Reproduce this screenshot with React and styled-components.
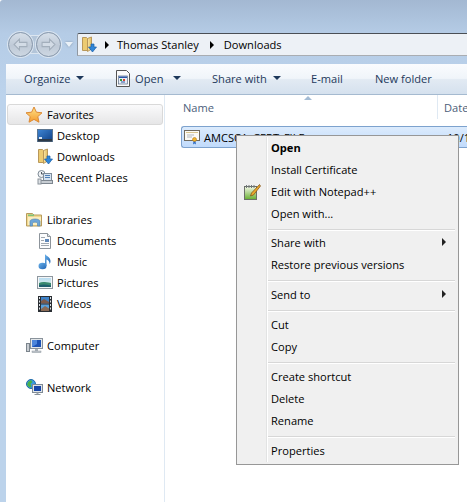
import React from 'react';
import styled, { createGlobalStyle } from 'styled-components';

const GlobalStyle = createGlobalStyle`
  html, body {
    margin: 0;
    padding: 0;
    background: #fff;
  }
  body {
    font-family: "Open Sans", "Noto Sans", "Liberation Sans", sans-serif;
    font-size: 11.1px;
    color: #000;
  }
`;

const StarIcon = () => (
  <svg width="18" height="18" viewBox="0 0 18 18">
    <defs>
      <linearGradient id="star" x1="0" y1="0" x2="0" y2="1">
        <stop offset="0" stopColor="#fde48a" />
        <stop offset="1" stopColor="#f59a2c" />
      </linearGradient>
    </defs>
    <path d="M9 1l2.4 5.2 5.6.6-4.2 3.8 1.2 5.6L9 13.4 4 16.2l1.2-5.6L1 6.8l5.6-.6z" fill="url(#star)" stroke="#dc8a36" strokeWidth="1" />
  </svg>
);

const DesktopIcon = () => (
  <svg width="16" height="14" viewBox="0 0 16 14">
    <defs>
      <linearGradient id="desk" x1="0" y1="0" x2="1" y2="1">
        <stop offset="0" stopColor="#3f86d4" />
        <stop offset="1" stopColor="#0e3f86" />
      </linearGradient>
    </defs>
    <rect x="0.500" y="0.500" width="15" height="12" fill="url(#desk)" stroke="#5b7590" />
    <rect x="1" y="10" width="14" height="2.500" fill="#2d3a48" />
    <rect x="2" y="8" width="3" height="2" fill="#d9e6f4" />
  </svg>
);

const DownloadFolderIcon = () => (
  <svg width="16" height="17" viewBox="0 0 16 17">
    <defs>
      <linearGradient id="dlf" x1="0" y1="0" x2="1" y2="0">
        <stop offset="0" stopColor="#fbe9a8" />
        <stop offset="1" stopColor="#dfb95e" />
      </linearGradient>
    </defs>
    <path d="M1.500 1.500h4l1 1v12h-5z" fill="#eccb72" stroke="#b9985a" />
    <path d="M6.500 2.500l4-1.500v12l-4 2.500z" fill="url(#dlf)" stroke="#b9985a" />
    <path d="M10 8h3v3h2.500l-4 5-4-5H10z" fill="#2f86d8" stroke="#1b5ea6" strokeWidth="0.7" />
  </svg>
);

const RecentIcon = () => (
  <svg width="17" height="16" viewBox="0 0 17 16">
    <circle cx="4.500" cy="4" r="3.500" fill="#eef1f4" stroke="#7f8b96" />
    <path d="M4.500 2v2h2" fill="none" stroke="#4c5660" />
    <rect x="6.500" y="3.500" width="8" height="7" fill="#d5e3f2" stroke="#7e8c9a" />
    <rect x="8" y="5" width="5" height="1" fill="#4f7fb5" />
    <rect x="8" y="7" width="5" height="1" fill="#4f7fb5" />
    <rect x="3.500" y="10.500" width="12" height="3" fill="#c7cdd3" stroke="#7e8790" />
    <rect x="1" y="9" width="3" height="5" fill="#dde1e5" stroke="#8b949c" />
  </svg>
);

const LibraryIcon = () => (
  <svg width="17" height="15" viewBox="0 0 17 15">
    <path d="M0.500 1.500h6l1.500 1.500h7.500v11h-15z" fill="#f2d98f" stroke="#b89c5d" />
    <rect x="2" y="2.500" width="6" height="1.600" fill="#7fc37b" />
    <rect x="2" y="5" width="13" height="8" fill="#fbeec0" />
    <path d="M4 14V9.500c0-1.500 2-2.500 5-2.500s5 1 5 2.500V14h-2.500v-2.800c0-.6-1-1-2.500-1s-2.500.4-2.500 1V14z" fill="#6ea6d8" stroke="#4b7fb0" strokeWidth="0.6" />
  </svg>
);

const DocumentIcon = () => (
  <svg width="14" height="16" viewBox="0 0 14 16">
    <path d="M1.500.5h8l3 3v12h-11z" fill="#fbfcfd" stroke="#8d949b" />
    <path d="M9.500.5v3h3" fill="#dfe4e9" stroke="#8d949b" />
    <rect x="3" y="4" width="4" height="1" fill="#a0a8b0" />
    <rect x="7" y="6" width="4" height="3" fill="#5d86b8" />
    <rect x="3" y="7" width="3" height="1" fill="#a0a8b0" />
    <rect x="3" y="10" width="8" height="1" fill="#a0a8b0" />
    <rect x="3" y="12" width="8" height="1" fill="#a0a8b0" />
  </svg>
);

const MusicIcon = () => (
  <svg width="14" height="17" viewBox="0 0 14 17">
    <defs>
      <linearGradient id="note" x1="0" y1="0" x2="1" y2="1">
        <stop offset="0" stopColor="#6bb2ea" />
        <stop offset="1" stopColor="#1f63b4" />
      </linearGradient>
    </defs>
    <ellipse cx="4.500" cy="13" rx="4" ry="3.300" fill="url(#note)" />
    <path d="M7 13V1c1 2 5.500 3 5.500 7 0 1.500-.5 2.500-1 3 .2-2.500-1.500-4-3-4.500V13z" fill="url(#note)" />
  </svg>
);

const PictureIcon = () => (
  <svg width="16" height="13" viewBox="0 0 16 13">
    <defs>
      <linearGradient id="sky" x1="0" y1="0" x2="0" y2="1">
        <stop offset="0" stopColor="#b8dcf2" />
        <stop offset="1" stopColor="#ecf5e6" />
      </linearGradient>
    </defs>
    <rect x="0.500" y="0.500" width="15" height="12" fill="#f4f6f7" stroke="#8e979f" />
    <rect x="2" y="2" width="12" height="9" fill="url(#sky)" />
    <path d="M2 7c3-1.500 6-1 12 0v4H2z" fill="#3b8a70" />
    <path d="M2 9c4-1 8-.5 12 .5V11H2z" fill="#1f5f6e" />
  </svg>
);

const VideoIcon = () => (
  <svg width="14" height="16" viewBox="0 0 14 16">
    <rect x="0" y="0" width="14" height="16" fill="#2a2e33" />
    <rect x="3" y="1" width="8" height="6.500" fill="#3f83c9" />
    <rect x="3" y="8.500" width="8" height="6.500" fill="#58a0dc" />
    <path d="M3 5l3-2 5 3v1.500H3z" fill="#7d5a4a" />
    <path d="M3 13l4-3 4 2.500V15H3z" fill="#8a6a55" />
    <path d="M1 1h1v2H1zM1 4.500h1v2H1zM1 8h1v2H1zM1 11.500h1v2H1zM12 1h1v2h-1zM12 4.500h1v2h-1zM12 8h1v2h-1zM12 11.500h1v2h-1z" fill="#dfe4e8" />
  </svg>
);

const ComputerIcon = () => (
  <svg width="17" height="16" viewBox="0 0 17 16">
    <rect x="0.500" y="5.500" width="3" height="8" fill="#c9ced3" stroke="#7b848c" />
    <rect x="4.500" y="0.500" width="12" height="10" fill="#e3e7ea" stroke="#8a939b" />
    <rect x="6" y="2" width="9" height="7" fill="#1d53b5" />
    <path d="M6 2h5v4l-5 3z" fill="#4d86dc" />
    <path d="M9 11h3v2H9z" fill="#aab2b9" />
    <rect x="6" y="13" width="9" height="1.500" fill="#c4cad0" stroke="#8a939b" strokeWidth="0.5" />
  </svg>
);

const NetworkIcon = () => (
  <svg width="17" height="17" viewBox="0 0 17 17">
    <circle cx="5" cy="5" r="4.500" fill="#3a9be0" stroke="#216ba8" />
    <path d="M2 3l3-2 1.500 2-2 2 1 2.500-2 1L1 6z" fill="#49b24a" />
    <rect x="6.500" y="5.500" width="10" height="8" fill="#dfe4e8" stroke="#7f8a94" />
    <rect x="8" y="7" width="7" height="5" fill="#1746a8" />
    <rect x="10.500" y="13.500" width="2" height="1.500" fill="#9aa3ab" />
    <rect x="8.500" y="15" width="6" height="1" fill="#8a939b" />
  </svg>
);

const CertificateIcon = () => (
  <svg width="17" height="16" viewBox="0 0 17 16">
    <rect x="0.500" y="1.500" width="15" height="10" fill="#fbfaf4" stroke="#6f6a5e" />
    <rect x="2" y="3" width="12" height="1" fill="#d8c48e" />
    <rect x="3" y="5.500" width="7" height="1" fill="#b4b8be" />
    <rect x="3" y="7.500" width="5" height="1" fill="#b4b8be" />
    <path d="M9.500 12l-.5 3.500 1.500-1 1.500 1-.5-3.500z" fill="#2f6fc8" />
    <circle cx="10.500" cy="10.500" r="2" fill="#f0b42c" stroke="#b87a16" strokeWidth="0.6" />
  </svg>
);

const NotepadIcon = () => (
  <svg width="17" height="17" viewBox="0 0 17 17">
    <defs>
      <linearGradient id="pad" x1="0" y1="0" x2="0" y2="1">
        <stop offset="0" stopColor="#f4f8e8" />
        <stop offset="1" stopColor="#67b030" />
      </linearGradient>
    </defs>
    <rect x="0.500" y="2.500" width="12" height="13" fill="url(#pad)" stroke="#6a7068" />
    <path d="M2 1h1v3H2zM4.500 1h1v3h-1zM7 1h1v3H7zM9.500 1h1v3h-1z" fill="#70767a" />
    <path d="M15.500 0.500L7.500 9l-1 3 3-1 7-9z" fill="#e9a82c" stroke="#7b4a12" strokeWidth="0.7" />
  </svg>
);

const OpenAppIcon = () => (
  <svg width="14" height="17" viewBox="0 0 14 17">
    <path d="M.5.500h10l3 3v13H.500z" fill="#fbfbfb" stroke="#555" />
    <rect x="2.500" y="6" width="9" height="8" fill="#e8eef6" stroke="#5a6c84" strokeWidth="0.7" />
    <rect x="3" y="6.500" width="8" height="1.500" fill="#2b56a8" />
    <rect x="4" y="9" width="2" height="2" fill="#2f9a3c" />
    <rect x="7" y="9" width="2" height="2" fill="#d8402e" />
    <rect x="5" y="11.500" width="4" height="1" fill="#2b56a8" />
  </svg>
);

const Page = styled.div`
  position: relative;
  width: 467px;
  height: 502px;
  overflow: hidden;
  display: flex;
  flex-direction: column;
  background: linear-gradient(#a3b8d2 0, #b5cce6 34px, #bcd3ec 95px, #bcd3eb 100%);
  border-top-left-radius: 3px;
`;

const AddressRow = styled.div`
  display: flex;
  align-items: center;
  height: 23px;
  margin-top: 33px;
  flex: none;
`;

const NavGroup = styled.div`
  display: flex;
  align-items: center;
  isolation: isolate;
  width: 77px;
  height: 23px;
  padding-left: 8px;
  box-sizing: border-box;
`;

const NavRound = styled.div`
  position: relative;
  display: flex;
  align-items: center;
  justify-content: center;
  width: 25px;
  height: 25px;
  flex: none;
  margin-left: ${p => (p.$second ? '3px' : 0)};
  border-radius: 50%;
  box-sizing: border-box;
  border: 1px solid #8a99ab;
  box-shadow: 0 0 0 1px #dbe5f0;
  background: linear-gradient(#d6dfe9, #bfcad7 55%, #cdd7e2);

  ${p =>
    p.$second &&
    `&::before {
      content: '';
      position: absolute;
      left: -9px;
      top: 2px;
      width: 12px;
      height: 19px;
      box-sizing: border-box;
      border-top: 1px solid #dbe5f0;
      border-bottom: 1px solid #dbe5f0;
      background: #b3c5d9;
      z-index: -1;
    }`}
`;

const DropCaret = styled.span`
  width: 0;
  height: 0;
  margin-left: 4px;
  border-left: 4px solid transparent;
  border-right: 4px solid transparent;
  border-top: 5px solid #eaf1f8;
  filter: drop-shadow(0 0 1px #8095ac);
`;

const AddressBar = styled.div`
  flex: 1;
  display: flex;
  align-items: center;
  height: 23px;
  box-sizing: border-box;
  border-top: 1px solid #4a4f55;
  border-bottom: 1px solid #a9adb2;
  border-left: 1px solid #8f98a2;
  border-top-left-radius: 2px;
  background: #edf1f6;
  padding-left: 3px;
`;

const Crumb = styled.span`
  margin-right: 11px;
`;

const CrumbArrow = styled.span`
  width: 0;
  height: 0;
  margin-left: ${p => (p.$first ? '8px' : 0)};
  margin-right: ${p => (p.$first ? 8 : 10)}px;
  border-top: 4px solid transparent;
  border-bottom: 4px solid transparent;
  border-left: 4px solid #000;
`;

const Toolbar = styled.div`
  display: flex;
  align-items: center;
  flex: none;
  height: 28px;
  margin: 8px 0 0 6px;
  padding: 0 0 2px 18px;
  color: #1e395b;
  background: linear-gradient(#fafcfe 0, #f0f5fa 48%, #e2eaf3 52%, #d5e1ee 100%);
  border-bottom: 1px solid #a5bad0;
`;

const ToolItem = styled.div`
  display: flex;
  align-items: center;
  width: ${p => p.$width}px;
  flex: none;
`;

const ToolCaret = styled.span`
  width: 0;
  height: 0;
  margin-left: ${p => p.$gap}px;
  border-left: 4px solid transparent;
  border-right: 4px solid transparent;
  border-top: 4px solid #1e395b;
`;

const ToolIcon = styled.span`
  display: flex;
  margin-right: 5px;
`;

const Body = styled.div`
  flex: 1;
  display: flex;
  margin-left: 6px;
  background: #fff;
  min-height: 0;
`;

const NavPane = styled.nav`
  width: 159px;
  flex: none;
  padding-top: 9px;
  box-sizing: border-box;
  border-right: 1px solid #dfe9f3;
`;

const NavGroupBlock = styled.div`
  margin-bottom: 21px;
`;

const NavRow = styled.div`
  display: flex;
  align-items: center;
  height: 21px;
  box-sizing: border-box;
  padding-left: ${p => (p.$child ? 30 : 19)}px;
`;

const SelectedRow = styled(NavRow)`
  margin: 0 1px;
  padding-left: 17px;
  border: 1px solid #d9d9d9;
  border-radius: 3px;
  background: linear-gradient(#fafafb, #e6e6e7);
`;

const NavIcon = styled.span`
  display: flex;
  justify-content: center;
  align-items: center;
  width: 18px;
  margin-right: ${p => (p.$child ? 3 : 4)}px;
`;

const FilePane = styled.main`
  flex: 1;
  position: relative;
  min-width: 0;
`;

const HeaderRow = styled.div`
  position: relative;
  display: flex;
  height: 31px;
  padding-left: 18px;
  color: #4c607a;
`;

const HeaderName = styled.span`
  width: 255px;
  height: 24px;
  padding-top: 5px;
  flex: none;
  box-sizing: border-box;
  background: linear-gradient(90deg, transparent calc(100% - 1px), #dfe9f3 calc(100% - 1px));
`;

const HeaderDate = styled.span`
  padding: 5px 0 0 6px;
`;

const SortArrow = styled.span`
  position: absolute;
  top: 1px;
  left: 139px;
  width: 0;
  height: 0;
  border-left: 4px solid transparent;
  border-right: 4px solid transparent;
  border-bottom: 4px solid #a3bbd4;
`;

const FileRow = styled.div`
  display: flex;
  align-items: center;
  height: 22px;
  margin-left: 16px;
  padding-left: 2px;
  box-sizing: border-box;
  overflow: hidden;
  white-space: nowrap;
  border: 1px solid #7da2ce;
  border-right: none;
  border-radius: 3px 0 0 3px;
  background: linear-gradient(#dcebfc, #c1dbfc);
`;

const FileIcon = styled.span`
  display: flex;
  flex: none;
`;

const FileName = styled.span`
  flex: none;
  width: 243px;
  margin-left: 3px;
`;

const FileDate = styled.span`
  flex: none;
`;

const Menu = styled.div`
  position: absolute;
  left: 236px;
  top: 135px;
  width: 223px;
  box-sizing: border-box;
  padding: 1px 1px 2px;
  border: 1px solid #979797;
  background: #f0f0f0;
`;

const MenuItem = styled.div`
  position: relative;
  display: flex;
  align-items: center;
  justify-content: space-between;
  height: 22px;
  box-sizing: border-box;
  padding: 0 11px 2px 33px;
  font-weight: ${p => (p.$bold ? 700 : 400)};
  background: linear-gradient(90deg, transparent 28px, #e2e3e3 28px, #e2e3e3 29px, #fff 29px, #fff 30px, transparent 30px);
`;

const MenuIcon = styled.span`
  position: absolute;
  left: 6px;
  top: 3px;
  display: flex;
`;

const MenuSep = styled.div`
  height: ${p => (p.$tight ? 7 : 8)}px;
  background:
    linear-gradient(#d7d7d7, #d7d7d7) 30px 4px / calc(100% - 32px) 1px no-repeat,
    linear-gradient(#fff, #fff) 30px 5px / calc(100% - 32px) 1px no-repeat,
    linear-gradient(90deg, transparent 28px, #e2e3e3 28px, #e2e3e3 29px, #fff 29px, #fff 30px, transparent 30px);
`;

const SubArrow = styled.span`
  width: 0;
  height: 0;
  border-top: 4px solid transparent;
  border-bottom: 4px solid transparent;
  border-left: 4px solid #222;
`;

const groups = [
  {
    title: 'Favorites',
    icon: <StarIcon />,
    selected: true,
    items: [
      ['Desktop', <DesktopIcon />],
      ['Downloads', <DownloadFolderIcon />],
      ['Recent Places', <RecentIcon />],
    ],
  },
  {
    title: 'Libraries',
    icon: <LibraryIcon />,
    items: [
      ['Documents', <DocumentIcon />],
      ['Music', <MusicIcon />],
      ['Pictures', <PictureIcon />],
      ['Videos', <VideoIcon />],
    ],
  },
  { title: 'Computer', icon: <ComputerIcon />, items: [] },
  { title: 'Network', icon: <NetworkIcon />, items: [] },
];

const menu = [
  [
    { label: 'Open', bold: true },
    { label: 'Install Certificate' },
    { label: 'Edit with Notepad++', icon: <NotepadIcon /> },
    { label: 'Open with...' },
  ],
  [{ label: 'Share with', sub: true }, { label: 'Restore previous versions' }],
  [{ label: 'Send to', sub: true }],
  [{ label: 'Cut' }, { label: 'Copy' }],
  [{ label: 'Create shortcut' }, { label: 'Delete' }, { label: 'Rename' }],
  [{ label: 'Properties' }],
];

const App = () => (
  <Page>
    <GlobalStyle />
    <AddressRow>
      <NavGroup>
        <NavRound>
          <svg width="15" height="13" viewBox="0 0 14 12">
            <path d="M1 6l5-5v3h7v4H6v3z" fill="#d3dce6" stroke="#a3afbc" />
          </svg>
        </NavRound>
        <NavRound $second>
          <svg width="15" height="13" viewBox="0 0 14 12">
            <path d="M13 6L8 1v3H1v4h7v3z" fill="#d3dce6" stroke="#a3afbc" />
          </svg>
        </NavRound>
        <DropCaret />
      </NavGroup>
      <AddressBar>
        <DownloadFolderIcon />
        <CrumbArrow $first />
        <Crumb>Thomas Stanley</Crumb>
        <CrumbArrow />
        <Crumb>Downloads</Crumb>
      </AddressBar>
    </AddressRow>
    <Toolbar>
      <ToolItem $width={92}>
        Organize<ToolCaret $gap={6} />
      </ToolItem>
      <ToolItem $width={96}>
        <ToolIcon><OpenAppIcon /></ToolIcon>
        Open<ToolCaret $gap={10} />
      </ToolItem>
      <ToolItem $width={99}>
        Share with<ToolCaret $gap={6} />
      </ToolItem>
      <ToolItem $width={64}>E-mail</ToolItem>
      <ToolItem $width={70}>New folder</ToolItem>
    </Toolbar>
    <Body>
      <NavPane>
        {groups.map(group => {
          const Head = group.selected ? SelectedRow : NavRow;
          return (
            <NavGroupBlock key={group.title}>
              <Head>
                <NavIcon>{group.icon}</NavIcon>
                {group.title}
              </Head>
              {group.items.map(([label, icon]) => (
                <NavRow key={label} $child>
                  <NavIcon $child>{icon}</NavIcon>
                  {label}
                </NavRow>
              ))}
            </NavGroupBlock>
          );
        })}
      </NavPane>
      <FilePane>
        <HeaderRow>
          <SortArrow />
          <HeaderName>Name</HeaderName>
          <HeaderDate>Date</HeaderDate>
        </HeaderRow>
        <FileRow>
          <FileIcon><CertificateIcon /></FileIcon>
          <FileName>AMCSCA_CERT_FILE</FileName>
          <FileDate>10/1/2014</FileDate>
        </FileRow>
      </FilePane>
    </Body>
    <Menu>
      {menu.map((section, i) => (
        <React.Fragment key={i}>
          {i > 0 && <MenuSep $tight={i === 1} />}
          {section.map(item => (
            <MenuItem key={item.label} $bold={item.bold}>
              {item.icon && <MenuIcon>{item.icon}</MenuIcon>}
              {item.label}
              {item.sub && <SubArrow />}
            </MenuItem>
          ))}
        </React.Fragment>
      ))}
    </Menu>
  </Page>
);

export default App;
